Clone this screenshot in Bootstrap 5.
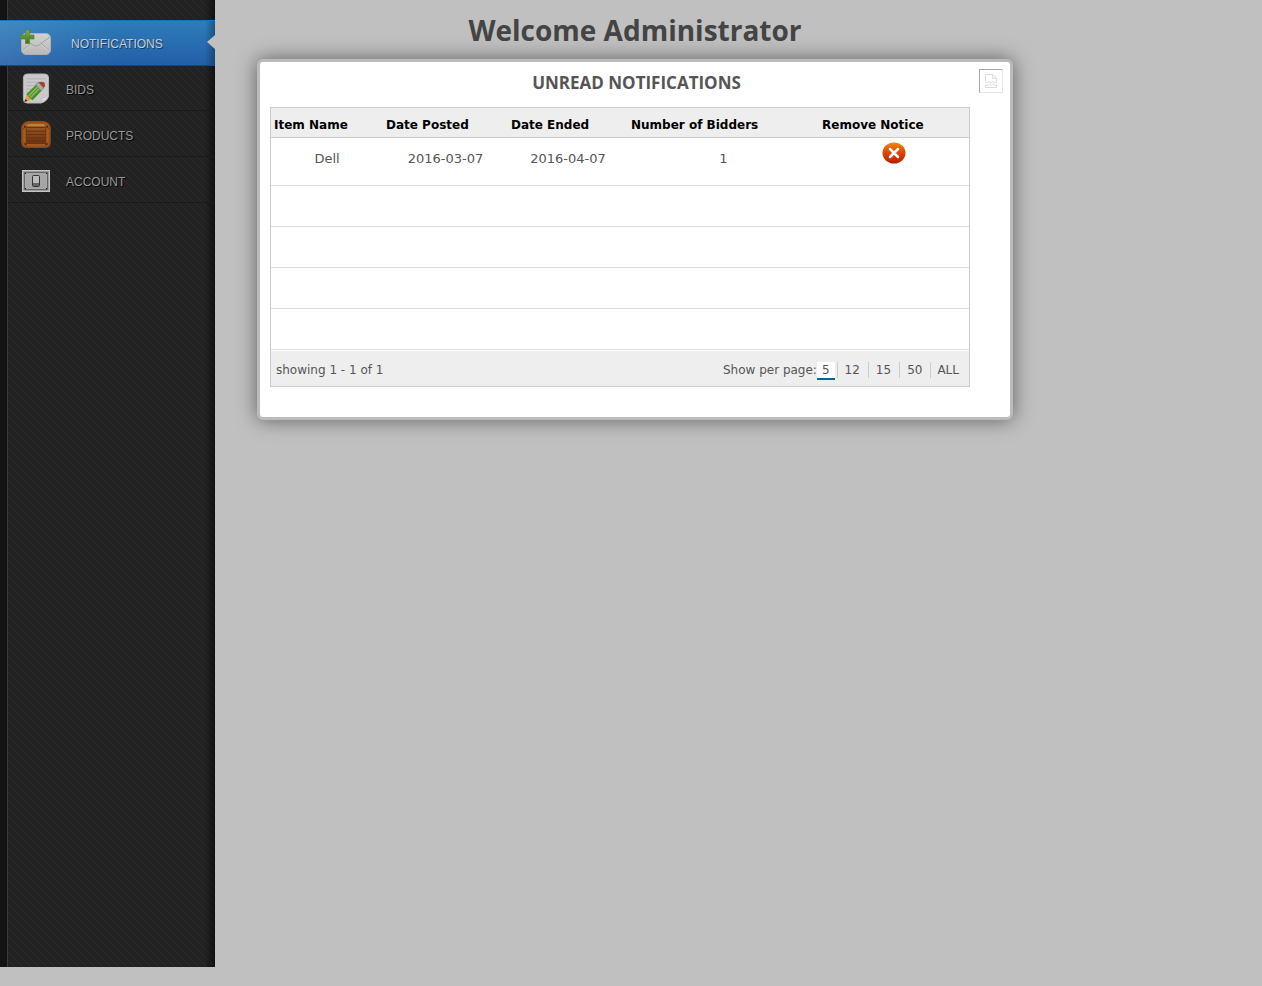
<!DOCTYPE html>
<html lang="en">
<head>
<meta charset="utf-8">
<meta name="viewport" content="width=device-width, initial-scale=1">
<title>Administrator</title>
<link href="https://cdn.jsdelivr.net/npm/bootstrap@5.3.0/dist/css/bootstrap.min.css" rel="stylesheet">
<style>
body { background: #c0c0c0; color: #555; font-family: "DejaVu Sans", sans-serif; font-size: 12px; line-height: 16px; }
.side-panel {
  width: 215px; min-height: calc(100vh - 19px); padding-top: 20px;
  font-family: "Liberation Sans", sans-serif;
  background:
    linear-gradient(to left, rgba(0,0,0,.55), transparent 10px),
    linear-gradient(to right, #131313 7px, #3a3a3a 7px, #3a3a3a 8px, transparent 8px),
    linear-gradient(45deg, transparent 46%, #2b2b2b 46%, #2b2b2b 54%, transparent 54%) 0 0 / 8px 8px,
    #222;
}
.side-panel .nav-link {
  height: 46px; padding: 0 0 0 20px; gap: 14px; color: #999; text-shadow: 1px 1px 0 #000;
  background: linear-gradient(#1a1a1a, #1a1a1a) 100% 44px / 207px 1px no-repeat;
}
.side-panel .nav-link span { padding-top: 2px; }
.side-panel .nav-link.active {
  position: relative; gap: 19px; color: #ccc; text-shadow: 1px 1px 0 #10406a;
  border-top: 1px solid #0c76c4; border-bottom: 1px solid #1a4580;
  background:
    linear-gradient(to left, rgba(0,0,0,.3), transparent 10px),
    linear-gradient(to right, rgba(255,255,255,.1), transparent 110px),
    linear-gradient(#2d7db9, #235ea8);
}
.side-panel .nav-link.active::after {
  content: ""; position: absolute; right: 0; top: 14px;
  border: solid transparent; border-width: 7px 8px 7px 0; border-right-color: #c0c0c0;
}
.content-area { padding: 11px 42px 0; }
.board { max-width: 756px; }
.page-title { font: 700 28px/38px "Open Sans", sans-serif; color: #444; margin: 0 0 10px; }
.notice-card { border: 3px solid #bbb; border-radius: 6px; box-shadow: 0 0 20px rgba(0,0,0,.5); padding: 7px 7px 30px 10px; background: #fff; }
.card-head { display: grid; grid-template-columns: 1fr auto 1fr; align-items: start; height: 38px; }
.card-head h2 { font: 700 17px/28px "Open Sans", sans-serif; color: #555; margin: 0; }
.export-btn { width: 24px; height: 24px; padding: 0; border: 1px solid #e5e5e5; border-top-color: #aaa; border-left-color: #aaa; background: #fff; line-height: 0; justify-self: end; }
.grid-wrap { border: 1px solid #ccc; margin-right: 33px; }
.notice-table { width: 100%; table-layout: fixed; border-collapse: separate; border-spacing: 0; }
.col-item { width: 112px; } .col-posted { width: 125px; } .col-ended { width: 120px; } .col-bidders { width: 191px; }
.notice-table th { height: 30px; padding: 4px 0 0 3px; background: #eee; color: #000; font-weight: 700; font-size: 12px; border-bottom: 1px solid #ccc; white-space: nowrap; }
.notice-table td { height: 41px; padding: 0; text-align: center; font-size: 13px; border-bottom: 1px solid #ddd; }
.notice-table .filled td { height: 48px; padding-bottom: 6px; }
.notice-table .filled td:last-child { padding-bottom: 18px; }
.remove-btn { border: 0; padding: 0; background: none; line-height: 0; }
.grid-foot { background: #eee; margin-top: 1px; padding: 11px 10px 6px 5px; }
.page-sizes a { color: #555; text-decoration: none; padding: 0 0 0 7px; border-left: 1px solid #ccc; margin-right: 8px; height: 16px; }
.page-sizes a.current { background: #fff; border-left: 0; border-bottom: 2px solid #069; padding: 0 5px; height: 18px; margin-right: 2px; }
.page-sizes a:last-child { margin-right: 0; padding-left: 6px; }
</style>
</head>
<body>
<div class="d-flex align-items-start">
  <nav class="side-panel flex-shrink-0" aria-label="Main">
    <div class="nav flex-column flex-nowrap">
      <a class="nav-link active d-flex align-items-center" href="#" aria-current="page">
        <svg width="32" height="32" viewBox="0 -1 32 32" aria-hidden="true">
          <defs>
            <linearGradient id="env" x2="0" y2="1"><stop stop-color="#d2d2d2"/><stop offset="1" stop-color="#b9b9b9"/></linearGradient>
            <linearGradient id="plus" x2="0" y2="1"><stop stop-color="#7fae51"/><stop offset="1" stop-color="#3d7518"/></linearGradient>
          </defs>
          <rect x="1.500" y="5.500" width="29" height="21" rx="4.500" fill="url(#env)" stroke="#b0b0b0"/>
          <path d="M3 22 11 15.500M29 22 21 15.500M2 9 13 17q3 2 6 0L30 9" fill="none" stroke="#a2a2a2"/>
          <path d="M3 23 11 16.500M29 23 21 16.500" fill="none" stroke="#ddd" stroke-width=".6"/>
          <path d="M5.500 2h4v5h4.500v4h-4.500v4.500h-4V11H.5V7h5z" fill="url(#plus)" stroke="#57853a" stroke-width=".7"/>
        </svg>
        <span>NOTIFICATIONS</span>
      </a>
      <a class="nav-link d-flex align-items-center" href="#">
        <svg width="32" height="32" viewBox="-.5 0 33 33" aria-hidden="true">
          <path d="M7 1h18q4 0 4 4v17q0 7-8 9H7q-4 0-4-4V5q0-4 4-4z" fill="#c9c9c9" stroke="#b3b3b3"/>
          <path d="M6 6h20M6 9.500h20M6 13h20M6 16.500h15M6 20h12" stroke="#b2b2b2"/>
          <path d="M29 22q-1 6-8 9 2-2 1-5 4 0 7-4z" fill="#ddd" stroke="#b5b5b5" stroke-width=".6"/>
          <path d="m4 30 2.500-8L13 27z" fill="#dea04c"/>
          <path d="m4 30 1-3 2.500 1.500z" fill="#333"/>
          <path d="m6 22 10-10 6 6-9.500 10z" fill="#4f8c2b"/>
          <path d="m8.500 23.500 9-9M10.500 25l9-9" stroke="#87c25a" stroke-width="1.500"/>
          <path d="m15.500 12 3-2.500 5.500 6-2.500 3z" fill="#aaa" stroke="#777" stroke-width=".6"/>
          <path d="m18.500 9.500q5-1.500 6.500 1 1 3-1 5z" fill="#a5402c"/>
        </svg>
        <span>BIDS</span>
      </a>
      <a class="nav-link d-flex align-items-center" href="#">
        <svg width="32" height="32" viewBox="-1 -1 34 34" aria-hidden="true">
          <defs><linearGradient id="wood" x2="0" y2="1"><stop stop-color="#945522"/><stop offset="1" stop-color="#6b3210"/></linearGradient></defs>
          <path d="M7 2h18q5 1 6 6v17q-1 4-5 4H6q-4 0-5-4V8q1-5 6-6z" fill="#a05720" stroke="#8b4716" stroke-width="1.500"/>
          <path d="M5 5.500h22" stroke="#bd8446" stroke-width="2"/>
          <path d="M4.500 8v16M27.500 8v16" stroke="#b06b30"/>
          <rect x="5.500" y="8" width="21" height="17" fill="url(#wood)" stroke="#6a3210"/>
          <path d="M6 12h20M6 15.500h20M6 19h20M6 22h20" stroke="#5f2d0d" stroke-width=".8"/>
          <path d="m2.500 9.500 4.500-5M29.500 9.500l-4.500-5M3 24l4 4M29 24l-4 4" stroke="#713710"/>
          <path d="M3.500 7h1M27.500 7h1M4 26h1.500M26.500 26H28" stroke="#3b1905" stroke-width="1.500"/>
        </svg>
        <span>PRODUCTS</span>
      </a>
      <a class="nav-link d-flex align-items-center" href="#">
        <svg width="32" height="32" viewBox="0 0 32 32" aria-hidden="true">
          <rect x="2.500" y="5.500" width="27" height="21" fill="#9b9b9b" stroke="#c6c6c6"/>
          <rect x="4.500" y="7.500" width="23" height="17" fill="#a6a6a6" stroke="#666"/>
          <path d="M5 8.500h1M26 8.500h1M5 23.500h1M26 23.500h1" stroke="#222"/>
          <rect x="12.500" y="10.500" width="7" height="11" rx="1" fill="#999" stroke="#333"/>
          <path d="M13 11h6v7h-6z" fill="#bcbcbc"/><path d="M13 18h6v3h-6z" fill="#666"/>
        </svg>
        <span>ACCOUNT</span>
      </a>
    </div>
  </nav>

  <main class="content-area flex-grow-1">
    <div class="board">
      <h1 class="page-title text-center">Welcome Administrator</h1>
      <section class="notice-card">
        <div class="card-head">
          <span></span>
          <h2>UNREAD NOTIFICATIONS</h2>
          <button class="export-btn" type="button" aria-label="Export">
            <svg width="22" height="22" viewBox="0 0 22 22" fill="none" stroke="#ddd" aria-hidden="true">
              <path d="M5.500 11.500v-7h7l4 4v4M12.500 4.500v4h4M5 11.500l2 1.500 2-1.500 2 1.500 2-1.500 2 1.500 1.500-1M5.500 17.500v-3l2 1 2-1.500 2 1.500 2-1.500 2 1.500 1-1v3z"/>
            </svg>
          </button>
        </div>
        <div class="grid-wrap">
          <table class="notice-table">
            <colgroup>
              <col class="col-item"><col class="col-posted"><col class="col-ended"><col class="col-bidders"><col>
            </colgroup>
            <thead>
              <tr><th scope="col">Item Name</th><th scope="col">Date Posted</th><th scope="col">Date Ended</th><th scope="col">Number of Bidders</th><th scope="col">Remove Notice</th></tr>
            </thead>
            <tbody>
              <tr class="filled">
                <td>Dell</td><td>2016-03-07</td><td>2016-04-07</td><td>1</td>
                <td>
                  <button class="remove-btn" type="button" aria-label="Remove notice">
                    <svg width="24" height="22" viewBox="0 0 24 22" aria-hidden="true">
                      <defs><linearGradient id="rm" x2="0" y2="1"><stop stop-color="#f0860c"/><stop offset=".5" stop-color="#dc4508"/><stop offset="1" stop-color="#b81c00"/></linearGradient></defs>
                      <ellipse cx="12" cy="11" rx="11.500" ry="10.500" fill="url(#rm)"/>
                      <path d="m8 7 8 8M16 7l-8 8" stroke="#fff" stroke-width="2.500" stroke-linecap="round"/>
                    </svg>
                  </button>
                </td>
              </tr>
              <tr><td colspan="5"></td></tr>
              <tr><td colspan="5"></td></tr>
              <tr><td colspan="5"></td></tr>
              <tr><td colspan="5"></td></tr>
            </tbody>
          </table>
          <div class="grid-foot d-flex justify-content-between">
            <span>showing 1 - 1 of 1</span>
            <div class="page-sizes d-flex">
              <span>Show per page:</span>
              <a class="current" href="#" aria-current="true">5</a>
              <a href="#">12</a><a href="#">15</a><a href="#">50</a><a href="#">ALL</a>
            </div>
          </div>
        </div>
      </section>
    </div>
  </main>
</div>
<script src="https://cdn.jsdelivr.net/npm/bootstrap@5.3.0/dist/js/bootstrap.bundle.min.js"></script>
</body>
</html>
